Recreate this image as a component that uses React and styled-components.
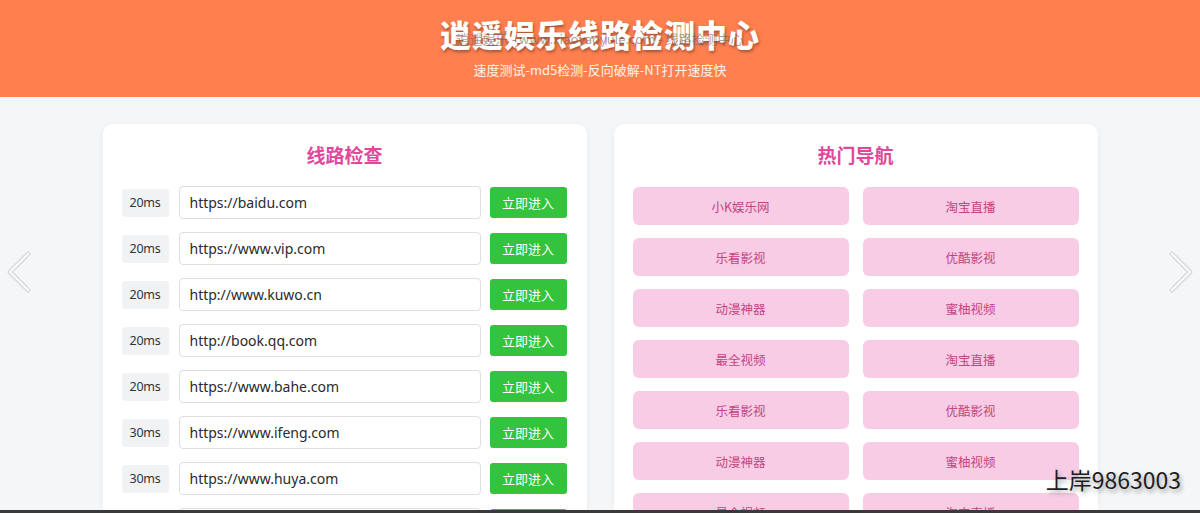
import React from 'react';
import styled, { createGlobalStyle } from 'styled-components';

const GlobalStyle = createGlobalStyle`
  html, body {
    margin: 0;
    padding: 0;
    background: #f5f6f8;
    font-family: "Noto Sans", "Noto Sans CJK SC", sans-serif;
    overflow: hidden;
  }
`;

// data
const lines = [
  { ms: '20ms', url: 'https://baidu.com' },
  { ms: '20ms', url: 'https://www.vip.com' },
  { ms: '20ms', url: 'http://www.kuwo.cn' },
  { ms: '20ms', url: 'http://book.qq.com' },
  { ms: '20ms', url: 'https://www.bahe.com' },
  { ms: '30ms', url: 'https://www.ifeng.com' },
  { ms: '30ms', url: 'https://www.huya.com' },
  { ms: '30ms', url: 'https://www.iqiyi.com' },
  { ms: '30ms', url: 'https://www.youku.com' },
];

const navs = [
  '小K娱乐网', '淘宝直播',
  '乐看影视', '优酷影视',
  '动漫神器', '蜜柚视频',
  '最全视频', '淘宝直播',
  '乐看影视', '优酷影视',
  '动漫神器', '蜜柚视频',
  '最全视频', '淘宝直播',
];

// styled-components
const Page = styled.div`
  position: relative;
  min-height: 513px;
`;

const Header = styled.header`
  position: relative;
  height: 97px;
  background: #ff7f4f;
  display: flex;
  flex-direction: column;
  align-items: center;
  box-sizing: border-box;
  padding-top: 13px;
`;

const Title = styled.h1`
  margin: 0;
  font-family: "Noto Sans CJK SC", sans-serif;
  font-weight: 900;
  font-size: 31px;
  line-height: 42px;
  letter-spacing: 1px;
  color: #fff;
  text-shadow: 1px 2px 3px rgba(80, 40, 30, 0.5);
`;

// faint overlay text lying across the title
const TitleMark = styled.div`
  position: absolute;
  top: 29px;
  left: 0;
  right: 0;
  text-align: center;
  font-family: "Noto Sans CJK SC", sans-serif;
  font-size: 13px;
  color: rgba(105, 95, 95, 0.6);
  pointer-events: none;
`;

const SubTitle = styled.p`
  margin: 5px 0 0;
  font-family: "Noto Sans CJK SC", sans-serif;
  font-size: 13px;
  color: #fff3ec;
`;

const Main = styled.main`
  display: flex;
  justify-content: center;
  gap: 27px;
  padding-top: 27px;
`;

const Card = styled.section`
  width: 484px;
  background: #fff;
  border-radius: 10px;
  box-shadow: 0 1px 6px rgba(0, 0, 0, 0.05);
  padding: 16px 19px 20px;
  box-sizing: border-box;
`;

const CardTitle = styled.h2`
  margin: 0 0 ${(p) => p.$gap}px;
  text-align: center;
  font-family: "Noto Sans CJK SC", sans-serif;
  font-weight: 700;
  font-size: 19px;
  line-height: 30px;
  color: #e0489b;
`;

const LineList = styled.div`
  display: flex;
  flex-direction: column;
  gap: 13px;
`;

const LineRow = styled.div`
  display: flex;
  align-items: center;
  height: 33px;
`;

const Latency = styled.span`
  width: 47px;
  height: 28px;
  flex: none;
  display: flex;
  align-items: center;
  justify-content: center;
  background: #f1f2f4;
  border-radius: 3px;
  font-size: 12.5px;
  color: #333;
  letter-spacing: -0.3px;
`;

const UrlInput = styled.div`
  margin-left: 10px;
  width: 302px;
  height: 33px;
  flex: none;
  box-sizing: border-box;
  border: 1px solid #dedfe2;
  border-radius: 4px;
  display: flex;
  align-items: center;
  padding-left: 10px;
  font-size: 14px;
  color: #2a2a2a;
`;

const EnterButton = styled.button`
  margin-left: 9px;
  width: 77px;
  height: 31px;
  border: none;
  border-radius: 3px;
  background: #33c33c;
  color: #fff;
  font-family: "Noto Sans CJK SC", sans-serif;
  font-size: 13px;
  cursor: pointer;
`;

const NavGrid = styled.div`
  display: grid;
  grid-template-columns: 216px 216px;
  justify-content: space-between;
  row-gap: 13px;
`;

const NavButton = styled.a`
  height: 38px;
  display: flex;
  align-items: center;
  justify-content: center;
  background: #f9cce6;
  border-radius: 6px;
  font-family: "Noto Sans CJK SC", sans-serif;
  font-size: 12.5px;
  color: #c3447f;
  text-decoration: none;
`;

const Arrow = styled.svg`
  position: absolute;
  top: 250px;
  ${(p) => (p.$side === 'left' ? 'left: 6px;' : 'right: 6px;')}
  width: 28px;
  height: 44px;
`;

const Watermark = styled.div`
  position: absolute;
  top: 462px;
  right: 19px;
  font-family: "Noto Sans CJK SC", sans-serif;
  font-size: 23px;
  color: #1e1e1e;
  text-shadow: 2px 3px 4px rgba(0, 0, 0, 0.35);
`;

const BottomEdge = styled.div`
  position: fixed;
  left: 0;
  right: 0;
  bottom: 0;
  height: 3px;
  background: #3a3a3a;
`;

const Chevron = ({ side }) => {
  const pts = side === 'left' ? '22,4 4,22 22,40' : '6,4 24,22 6,40';
  return (
    <Arrow $side={side} viewBox="0 0 28 44">
      <polyline points={pts} fill="none" stroke="#dcdcdc" strokeWidth="5" strokeLinecap="round" strokeLinejoin="round" />
      <polyline points={pts} fill="none" stroke="#fafafa" strokeWidth="2" strokeLinecap="round" strokeLinejoin="round" />
    </Arrow>
  );
};

export default function App() {
  return (
    <Page>
      <GlobalStyle />
      <Header>
        <Title>逍遥娱乐线路检测中心</Title>
        <TitleMark>逍遥娱乐 - www.xiaoyaoyule.com - 线路检测中心</TitleMark>
        <SubTitle>速度测试-md5检测-反向破解-NT打开速度快</SubTitle>
      </Header>
      <Main>
        <Card>
          <CardTitle $gap={16}>线路检查</CardTitle>
          <LineList>
            {lines.map((item, index) => (
              <LineRow key={index}>
                <Latency>{item.ms}</Latency>
                <UrlInput>{item.url}</UrlInput>
                <EnterButton>立即进入</EnterButton>
              </LineRow>
            ))}
          </LineList>
        </Card>
        <Card>
          <CardTitle $gap={17}>热门导航</CardTitle>
          <NavGrid>
            {navs.map((name, index) => (
              <NavButton key={index} href="#">{name}</NavButton>
            ))}
          </NavGrid>
        </Card>
      </Main>
      <Chevron side="left" />
      <Chevron side="right" />
      <Watermark>上岸9863003</Watermark>
      <BottomEdge />
    </Page>
  );
}
